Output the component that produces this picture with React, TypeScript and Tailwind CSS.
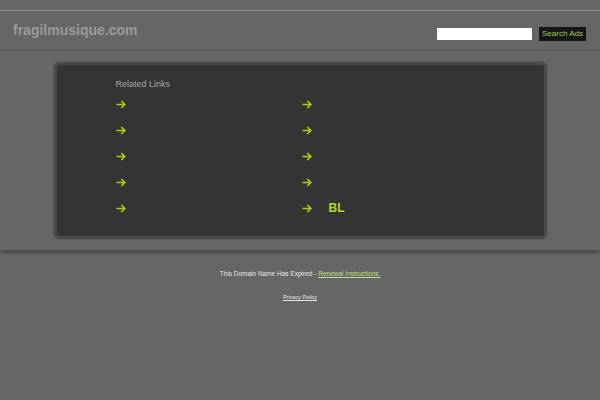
import React from "react";

const Arrow = () => (
  <svg width="10" height="9" viewBox="0 0 10 9" className="block">
    <path d="M0.5 4.5H8.8M5.3 1L8.8 4.5L5.3 8" fill="none" stroke="#a6d20f" strokeWidth="1.7" strokeLinecap="butt" strokeLinejoin="miter" />
  </svg>
);

const rows = [
  ["", ""],
  ["", ""],
  ["", ""],
  ["", ""],
  ["", "BL"],
];

export default function App() {
  return (
    <div className="w-[600px] h-[400px] bg-[#666666] font-['Liberation_Sans',Arial,sans-serif] overflow-hidden">
      <div className="h-[10px]" />
      <div className="h-[1px] bg-[#909090]" />
      <div className="h-[40px] flex justify-between border-b border-[#585858]">
        <div className="pl-[13px] pt-[10px] text-[14px] font-bold text-[#9a9a9a] leading-[18px]">fragilmusique.com</div>
        <div className="flex items-center gap-[7px] pr-[14px] pt-[6px]">
          <div className="w-[95px] h-[12px] bg-white" />
          <div className="h-[14px] w-[47px] bg-[#161616] text-[#a9c95a] text-[8px] leading-[14px] text-center">Search Ads</div>
        </div>
      </div>
      <div className="h-[199px] pt-[11px] flex justify-center shadow-[0_3px_4px_rgba(0,0,0,0.3)] relative">
        <div className="w-[493px] h-[177px] rounded-[6px] bg-[#343434] border-[3px] border-[#4a4a4a] shadow-[0_0_1px_1px_#5a5a5a] pl-[59px] pt-[13px]">
          <div className="text-[9px] leading-[13px] text-[#a8a8a8]">Related Links</div>
          <div className="flex flex-col">
            {rows.map((r, i) => (
              <div key={i} className="h-[26px] flex items-center">
                <div className="w-[186px] flex items-center">
                  <Arrow />
                  <span className="ml-[17px] text-[12px] font-bold text-[#b5d62c]">{r[0]}</span>
                </div>
                <div className="flex items-center">
                  <Arrow />
                  <span className="ml-[17px] text-[12px] font-bold text-[#b5d62c]">{r[1]}</span>
                </div>
              </div>
            ))}
          </div>
        </div>
      </div>
      <div className="pt-[19px] flex flex-col items-center">
        <div className="text-[6.5px] leading-[9px] text-[#e6e6e6]">
          This Domain Name Has Expired - <span className="text-[#c4df82] underline">Renewal Instructions.</span>
        </div>
        <div className="mt-[15px] text-[5.5px] leading-[9px] text-[#e6e6e6] underline">Privacy Policy</div>
      </div>
    </div>
  );
}
